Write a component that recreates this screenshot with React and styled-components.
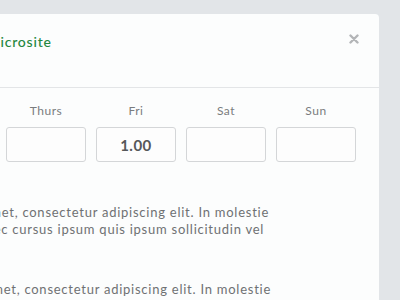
import React from 'react'
import styled, { createGlobalStyle } from 'styled-components'

const days = [
  { name: 'Mon', value: '' },
  { name: 'Tues', value: '' },
  { name: 'Wed', value: '' },
  { name: 'Thurs', value: '' },
  { name: 'Fri', value: '1.00' },
  { name: 'Sat', value: '' },
  { name: 'Sun', value: '' },
]

const GlobalStyle = createGlobalStyle`
  html, body {
    margin: 0;
    padding: 0;
    background: #e2e5e8;
  }
  * {
    box-sizing: border-box;
  }
`

const App = () => {
  return (
    <>
      <GlobalStyle />
      <Page>
        <Panel>
          <Header>
            <Title>Edit Microsite</Title>
            <Close aria-label="Close">
              <svg width="10" height="10" viewBox="0 0 10 10">
                <path
                  d="M1.5 1.5 L8.5 8.5 M8.5 1.5 L1.5 8.5"
                  stroke="#b3b5b7"
                  strokeWidth="2.4"
                  strokeLinecap="round"
                />
              </svg>
            </Close>
          </Header>
          <Body>
            <Days>
              {days.map((day) => (
                <Day key={day.name}>
                  <DayLabel>{day.name}</DayLabel>
                  <DayInput defaultValue={day.value} />
                </Day>
              ))}
            </Days>
            <Copy>
              <Paragraph>
                <Line lead={17}>amet, consectetur adipiscing elit. In molestie</Line>
                <Line lead={33}>Donec cursus ipsum quis ipsum sollicitudin vel</Line>
              </Paragraph>
              <Paragraph>
                <Line lead={15}>amet, consectetur adipiscing elit. In molestie</Line>
                <Line lead={33}>Donec cursus ipsum quis ipsum sollicitudin vel</Line>
              </Paragraph>
            </Copy>
          </Body>
        </Panel>
      </Page>
    </>
  )
}

const Page = styled.div`
  width: 400px;
  height: 300px;
  overflow: hidden;
  padding: 14px 21px 0 0;
`

const Panel = styled.section`
  margin-left: -300px;
  height: 320px;
  background: #fcfdfd;
  border-top-right-radius: 4px;
  font-family: Lato, 'Open Sans', sans-serif;
`

const Header = styled.header`
  display: flex;
  justify-content: space-between;
  align-items: flex-start;
  height: 74px;
  padding: 18px 20px 0 255px;
  border-bottom: 1px solid #e3e5e7;
`

const Title = styled.h1`
  margin: 0;
  font-size: 14px;
  line-height: 20px;
  font-weight: 500;
  letter-spacing: 0.8px;
  color: #24873f;
`

const Close = styled.button`
  display: flex;
  padding: 0;
  margin-top: 2px;
  border: 0;
  background: none;
  cursor: pointer;
`

const Body = styled.div`
  padding: 15px 23px 0 36px;
`

const Days = styled.div`
  display: flex;
  justify-content: flex-end;
  gap: 10px;
`

const Day = styled.div`
  display: flex;
  flex-direction: column;
  align-items: center;
  gap: 8px;
  width: 80px;
`

const DayLabel = styled.span`
  font-size: 12px;
  line-height: 16px;
  letter-spacing: 0.5px;
  color: #7a7c7e;
`

const DayInput = styled.input`
  width: 80px;
  height: 35px;
  border: 1px solid #d4d6d8;
  border-radius: 3px;
  background: #fdfdfd;
  text-align: center;
  font-family: inherit;
  font-size: 15px;
  font-weight: 700;
  letter-spacing: 0.5px;
  color: #56585a;
  outline: none;
`

const Copy = styled.div`
  padding: 42px 0 0 264px;
`

const Paragraph = styled.p`
  margin: 0 0 43px;
  font-size: 13px;
  line-height: 17px;
  letter-spacing: 0.75px;
  color: #6f7173;
`

const Line = styled.span`
  display: block;
  white-space: nowrap;
  margin-left: ${(p) => -p.lead}px;
`

export default App
